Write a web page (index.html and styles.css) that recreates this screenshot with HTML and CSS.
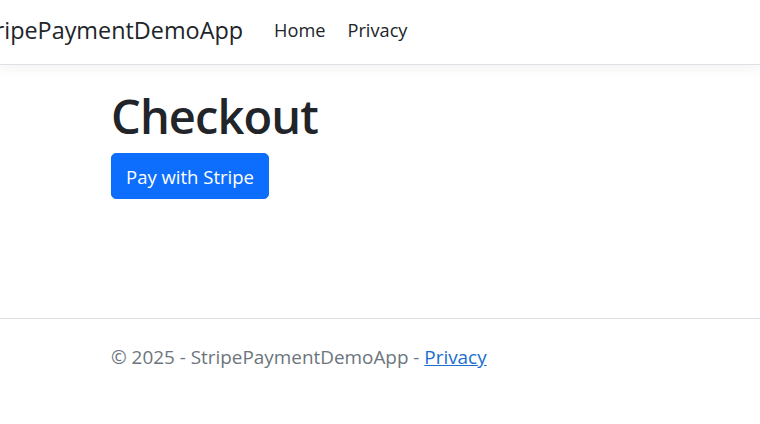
FILE: index.html
```html
<!DOCTYPE html>
<html lang="en">

<head>
    <meta charset="UTF-8">
    <meta name="viewport" content="width=device-width, initial-scale=1.0">
    <title>Checkout - StripePaymentDemoApp</title>
    <link rel="stylesheet" href="styles.css">
</head>

<body>

    <header>
        <nav class="navbar">
            <a class="brand" href="#">StripePaymentDemoApp</a>
            <ul class="nav-links">
                <li><a href="#">Home</a></li>
                <li><a href="#">Privacy</a></li>
            </ul>
        </nav>
    </header>

    <div class="container">
        <main class="main">
            <h1>Checkout</h1>
            <form>
                <button type="button" class="btn-primary">Pay with Stripe</button>
            </form>
        </main>
    </div>

    <footer class="footer">
        <div class="container">
            &copy; 2025 - StripePaymentDemoApp - <a href="#">Privacy</a>
        </div>
    </footer>

</body>

</html>
```

FILE: styles.css
```css
* {
    margin: 0;
    padding: 0;
    box-sizing: border-box;
}

body {
    font-family: "Open Sans", "Noto Sans", sans-serif;
    color: #212529;
    background-color: #fff;
    overflow-x: hidden;
    height: 424px;
}

/* top bar */
.navbar {
    display: flex;
    align-items: center;
    height: 65px;
    padding-bottom: 4px;
    border-bottom: 1px solid #dee2e6;
    box-shadow: 0 4px 12px rgba(0, 0, 0, 0.05);
    background-color: #fff;
}

.brand {
    font-size: 23.4px;
    color: #212529;
    text-decoration: none;
    margin-left: -26.5px;
    white-space: nowrap;
}

.nav-links {
    display: flex;
    list-style: none;
    margin-left: 20px;
}

.nav-links a {
    display: block;
    padding: 8px 11px;
    font-size: 18.2px;
    color: #212529;
    text-decoration: none;
}

/* page */
.container {
    margin-left: 111px;
    width: 540px;
}

.main {
    height: 253px;
    padding-top: 23px;
}

h1 {
    font-size: 47px;
    font-weight: 600;
    letter-spacing: -0.9px;
    line-height: 1.2;
    margin-bottom: 9px;
}

.btn-primary {
    font-family: inherit;
    font-size: 18.5px;
    line-height: 1.5;
    color: #fff;
    background-color: #0d6efd;
    border: 1px solid #0d6efd;
    border-radius: 5px;
    width: 158px;
    height: 46px;
    cursor: pointer;
}

.footer {
    border-top: 1px solid #dee2e6;
    line-height: 76px;
    font-size: 18.9px;
    color: #6c757d;
    white-space: nowrap;
}

.footer a {
    color: #1a6ed0;
}
```
